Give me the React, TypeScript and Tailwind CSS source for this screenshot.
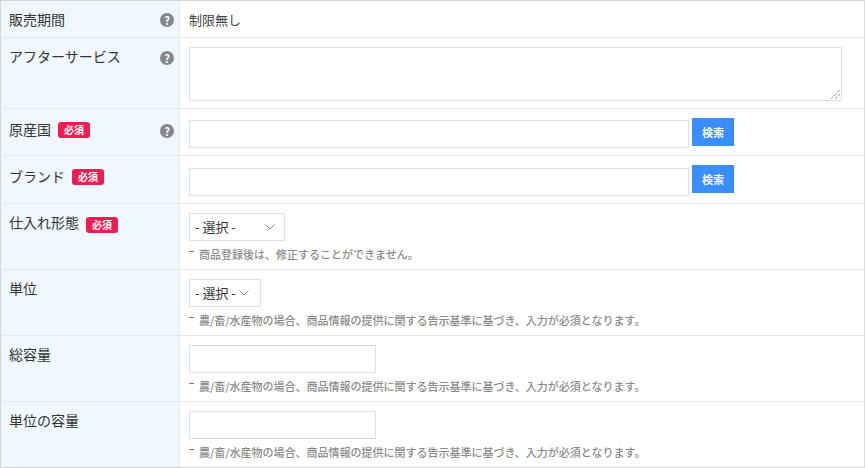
import React from "react";

const Help = () => (
  <span className="flex h-[14px] w-[14px] shrink-0 items-center justify-center rounded-full bg-[#85868c] text-[11px] font-bold leading-none text-white">?</span>
);
const Req = ({ top }: { top: string }) => (
  <span className={`ml-[7px] flex h-[16px] w-[32px] items-center justify-center rounded-[3px] bg-[#f01c52] text-[10px] font-bold leading-none text-white ${top}`}>必須</span>
);
const Note = ({ children }: { children: React.ReactNode }) => (
  <div className="mt-[4px] flex h-[18px] items-center text-[11px] leading-[18px] text-[#8a8a8a]">
    <span className="mr-[5px] mb-[6px] h-px w-[5px] bg-[#777]" />
    <span className="font-medium">{children}</span>
  </div>
);
const Row = ({ h, label, req, help, children, helpTop = "mt-[5px]", labelTop = "pt-[8px]", reqTop = "mt-[2px]" }: { h: string; label: string; req?: boolean; help?: boolean; children: React.ReactNode; helpTop?: string; labelTop?: string; reqTop?: string }) => (
  <div className={`flex border-b border-[#e4e9f0] last:border-b-0 ${h}`}>
    <div className={`flex w-[178px] shrink-0 items-start justify-between bg-[#eff7ff] pl-[8px] pr-[5px] ${labelTop}`}>
      <span className="flex h-[20px] items-center text-[14px] leading-[20px] text-[#333]">{label}{req && <Req top={reqTop} />}</span>
      {help && <span className={helpTop}><Help /></span>}
    </div>
    <div className="min-w-0 flex-1 border-l border-[#e4e9f0] pl-[9px] pt-[9px]">{children}</div>
  </div>
);
const Input = ({ w, top = "" }: { w: string; top?: string }) => <div className={`h-[28px] border border-[#d8e0ea] bg-white ${w} ${top}`} />;
const Search = ({ top }: { top: string }) => (
  <div className="flex items-start gap-[3px]">
    <Input w="w-[500px]" top={top} />
    <button className="flex h-[28px] w-[42px] items-center justify-center bg-[#3a8eff] text-[11px] font-bold text-white">検索</button>
  </div>
);
const Select = ({ w, gap }: { w: string; gap: string }) => (
  <div className={`flex h-[28px] items-center border border-[#d8e0ea] bg-white pl-[5px] text-[#333] ${w}`}>
    <span className="text-[13px]">- 選択 -</span>
    <svg className={gap} width="10" height="6" viewBox="0 0 10 6" fill="none" stroke="#85868c" strokeWidth="1"><path d="M.5.5 5 5 9.500.5" /></svg>
  </div>
);
const NOTE = "農/畜/水産物の場合、商品情報の提供に関する告示基準に基づき、入力が必須となります。";

export default function App() {
  return (
    <div className="h-[468px] w-[865px] overflow-hidden bg-white text-[13px] [font-family:'Noto_Sans_CJK_JP','Noto_Sans_CJK_KR',sans-serif]">
      <div className="h-[468px] border border-[#d5d5d5] border-r-[#dcdcdc]">
        <Row h="h-[37px]" label="販売期間" help helpTop="mt-[4px]"><span className="flex h-[20px] items-center text-[#444]">制限無し</span></Row>
        <Row h="h-[71px]" label="アフターサービス" help>
          <div className="relative h-[54px] w-[653px] border border-[#d8e0ea]">
            <svg className="absolute right-[1px] bottom-[1px]" width="9" height="9" viewBox="0 0 9 9" stroke="#666" strokeDasharray="1 1"><path d="M0 9 9 0M4 9 9 4" /></svg>
          </div>
        </Row>
        <Row h="h-[47px]" label="原産国" req help labelTop="pt-[10px]"><Search top="mt-[2px]" /></Row>
        <Row h="h-[48px]" label="ブランド" req labelTop="pt-[10px]"><Search top="mt-[3px]" /></Row>
        <Row h="h-[66px]" label="仕入れ形態" req reqTop="mt-[6px]">
          <Select w="w-[96px]" gap="ml-[29px]" />
          <Note>商品登録後は、修正することができません。</Note>
        </Row>
        <Row h="h-[66px]" label="単位">
          <Select w="w-[72px]" gap="ml-[3px]" />
          <Note>{NOTE}</Note>
        </Row>
        <Row h="h-[66px]" label="総容量">
          <Input w="w-[187px]" />
          <Note>{NOTE}</Note>
        </Row>
        <Row h="h-[65px]" label="単位の容量">
          <Input w="w-[187px]" />
          <Note>{NOTE}</Note>
        </Row>
      </div>
    </div>
  );
}
